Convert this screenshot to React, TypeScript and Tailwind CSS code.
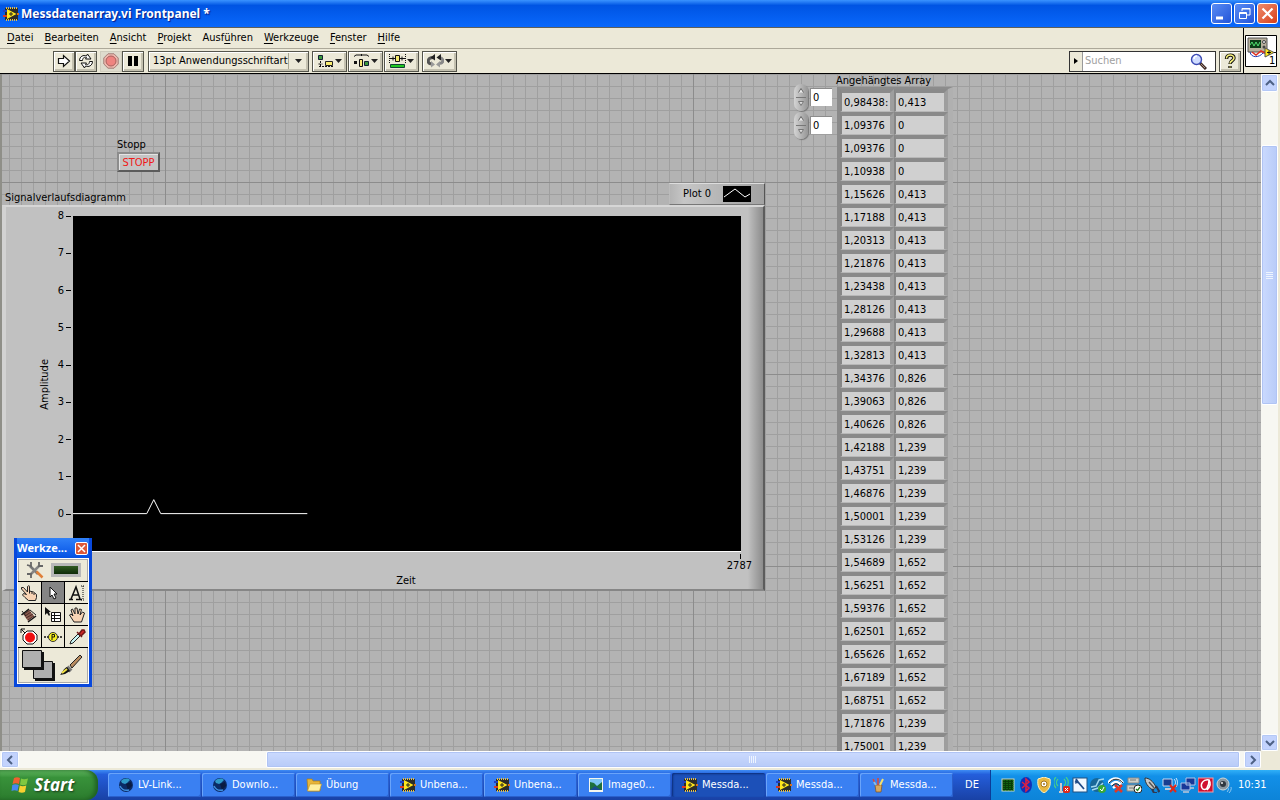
import type { ReactNode } from "react";

const rows: [string, string][] = [
  ["0,98438:", "0,413"],
  ["1,09376", "0"],
  ["1,09376", "0"],
  ["1,10938", "0"],
  ["1,15626", "0,413"],
  ["1,17188", "0,413"],
  ["1,20313", "0,413"],
  ["1,21876", "0,413"],
  ["1,23438", "0,413"],
  ["1,28126", "0,413"],
  ["1,29688", "0,413"],
  ["1,32813", "0,413"],
  ["1,34376", "0,826"],
  ["1,39063", "0,826"],
  ["1,40626", "0,826"],
  ["1,42188", "1,239"],
  ["1,43751", "1,239"],
  ["1,46876", "1,239"],
  ["1,50001", "1,239"],
  ["1,53126", "1,239"],
  ["1,54689", "1,652"],
  ["1,56251", "1,652"],
  ["1,59376", "1,652"],
  ["1,62501", "1,652"],
  ["1,65626", "1,652"],
  ["1,67189", "1,652"],
  ["1,68751", "1,652"],
  ["1,71876", "1,239"],
  ["1,75001", "1,239"],
];

// [text before the access key, access key, rest]
const menus: [string, string, string][] = [
  ["", "D", "atei"],
  ["", "B", "earbeiten"],
  ["", "A", "nsicht"],
  ["", "P", "rojekt"],
  ["Ausf", "ü", "hren"],
  ["", "W", "erkzeuge"],
  ["", "F", "enster"],
  ["", "H", "ilfe"],
];

const toolButton =
  "flex h-[21px] shrink-0 items-center justify-center border border-[#55554c] bg-[#ece9d8] shadow-[inset_1px_1px_0_#fff,inset_-2px_-2px_0_#c4c1b0]";

function ViIcon({ className = "size-4" }: { className?: string }) {
  return (
    <svg viewBox="0 0 16 16" className={className} aria-hidden="true">
      <rect x="2" y="2" width="13" height="12" fill="#2c2c28" />
      <path d="M3 2h11M3 14h11" stroke="#e5c04a" strokeWidth="2" strokeDasharray="1 1" />
      <path d="M0 5h4" stroke="#2040c0" strokeWidth="2" />
      <path d="M0 10h4" stroke="#d83a20" strokeWidth="2" />
      <path d="M14 8h2" stroke="#d87020" strokeWidth="2" />
      <path d="M4 3v10L13.500 8z" fill="#ffe71c" />
      <path d="M6 8h4M8 6v4" stroke="#222" />
    </svg>
  );
}

function Globe() {
  return (
    <svg viewBox="0 0 16 16" className="size-4" aria-hidden="true">
      <circle cx="8" cy="8" r="7" fill="#0b2b66" />
      <path d="M3 4c3-3 7-3 9-1l-3 3-2 1-3-1z" fill="#2f9ac8" />
      <path d="M8 7l5-2 1 4-4 4z" fill="#0a1b40" />
      <path d="M2 9c2 4 5 5 9 4" stroke="#3f8fe0" strokeWidth="1.500" fill="none" />
    </svg>
  );
}

function Folder() {
  return (
    <svg viewBox="0 0 16 16" className="size-4" aria-hidden="true">
      <path d="M1 2h5l1 2h7v10H2z" fill="#e8b63a" stroke="#b07d10" strokeWidth=".7" />
      <path d="M4 7h11.500l-2 7H1.500z" fill="#fff0a0" stroke="#c59a28" strokeWidth=".7" />
    </svg>
  );
}

function Picture() {
  return (
    <svg viewBox="0 0 16 16" className="size-4" aria-hidden="true">
      <rect x="1" y="1" width="14" height="14" fill="#f4f6ee" />
      <rect x="2" y="2" width="12" height="11" fill="#7cc4f4" />
      <path d="M2 13V5l4 1 3 3 5-4v8z" fill="#1d6f3c" />
      <path d="M2 13l5-4 6 4z" fill="#184a90" />
    </svg>
  );
}

function Brushes() {
  return (
    <svg viewBox="0 0 16 16" className="size-4" aria-hidden="true">
      <path d="M5 8h7l-1 7H6z" fill="#d8a860" stroke="#7c5020" strokeWidth=".7" />
      <path d="M6 8L3 2M8 8V1" stroke="#e04830" strokeWidth="1.500" />
      <path d="M10 8l3-6" stroke="#f4e070" strokeWidth="2" />
      <path d="M4 5l2 3" stroke="#7ec0f0" strokeWidth="2" />
    </svg>
  );
}

function Chevron({ d }: { d: string }) {
  return (
    <svg viewBox="0 0 10 10" className="size-[10px]" aria-hidden="true">
      <path d={d} fill="none" stroke="#4d6185" strokeWidth="2" />
    </svg>
  );
}

const scrollButton =
  "flex shrink-0 items-center justify-center rounded-xs border border-white bg-[#c3d3fd] shadow-[inset_0_0_0_1px_#b4c8f6]";

function Caret() {
  return (
    <svg viewBox="0 0 7 4" className="h-1 w-[7px]" aria-hidden="true">
      <path d="M0 0h7L3.500 4z" fill="#222" />
    </svg>
  );
}

function TitleBar() {
  const button =
    "flex size-[21px] items-center justify-center rounded-[3px] border border-white";
  return (
    <header className="flex h-7 shrink-0 items-center border-b border-[#5f5f5c] bg-linear-to-b from-[#3a93ff] via-[#0054e3] via-20% to-[#0a68fc] pr-[2px] pl-[3px]">
      <ViIcon />
      <h1 className="ml-[2px] font-['Noto_Sans','Liberation_Sans',sans-serif] text-[12px] font-bold text-white [text-shadow:1px_1px_1px_#0a1883]">
        Messdatenarray.vi Frontpanel *
      </h1>
      <div className="ml-auto flex gap-[2px]">
        <button aria-label="Minimieren" className={`${button} bg-linear-to-br from-[#5a8cf4] to-[#2353d8]`}>
          <svg viewBox="0 0 19 19" className="size-[19px]"><path d="M4 14h7" stroke="#fff" strokeWidth="3" /></svg>
        </button>
        <button aria-label="Wiederherstellen" className={`${button} bg-linear-to-br from-[#5a8cf4] to-[#2353d8]`}>
          <svg viewBox="0 0 19 19" className="size-[19px]" fill="none" stroke="#fff">
            <path d="M7 7V4.500h8V11h-3M7 5h8" />
            <path d="M4.500 8.500h7v6h-7zM4.500 9.500h7" />
          </svg>
        </button>
        <button aria-label="Schließen" className={`${button} bg-linear-to-br from-[#ec8a6a] to-[#d83c12]`}>
          <svg viewBox="0 0 19 19" className="size-[19px]"><path d="M4.500 4.500l10 10M14.500 4.500l-10 10" stroke="#fff" strokeWidth="2.200" /></svg>
        </button>
      </div>
    </header>
  );
}

function Toolbar() {
  return (
    <div className="flex h-6 items-center pr-[2px] pl-[53px]">
      <button aria-label="Ausführen" className={`${toolButton} w-[22px]`}>
        <svg viewBox="0 0 14 14" className="size-[14px]"><path d="M1.500 4.500h5v-3L12.500 7l-6 5.500v-3h-5z" fill="#fff" stroke="#111" strokeWidth="1.200" /></svg>
      </button>
      <button aria-label="Wiederholt ausführen" className={`${toolButton} w-[22px]`}>
        <svg viewBox="0 0 16 16" className="size-4" fill="#fff" stroke="#111">
          <path d="M1.500 7.500c0-4 4-6 7-4.500l1-2 3.500 5H7.500l1-1.500c-2-1-4 .5-4 3z" />
          <path d="M14.500 8.500c0 4-4 6-7 4.500l-1 2L3 10h5.500l-1 1.500c2 1 4-.5 4-3z" />
        </svg>
      </button>
      <button aria-label="Abbrechen" disabled className="ml-[3px] flex h-[21px] w-[22px] items-center justify-center border border-[#cfccbd] bg-[#dedbcd]">
        <svg viewBox="0 0 16 16" className="size-4">
          <path d="M5 .8h6L15.200 5v6L11 15.200H5L.8 11V5z" fill="#efb8ae" stroke="#a07c76" />
          <circle cx="8" cy="8" r="5" fill="#ef8480" stroke="#a8605c" />
        </svg>
      </button>
      <button aria-label="Pause" className={`${toolButton} w-[22px]`}>
        <svg viewBox="0 0 12 12" className="size-3"><path d="M1 1h4v10H1zM7 1h4v10H7z" fill="#000" /></svg>
      </button>
      <div className={`${toolButton} relative ml-1 w-[161px]`}>
        <select aria-label="Schriftart" className="h-full w-full appearance-none bg-transparent pl-1 text-[11px] outline-none">
          <option>13pt Anwendungsschriftart</option>
        </select>
        <span className="pointer-events-none absolute right-[6px] flex h-4 items-center border-l border-[#aaa795] pl-[6px]">
          <Caret />
        </span>
      </div>
      <button aria-label="Objekte ausrichten" className={`${toolButton} ml-[3px] w-[35px] gap-px`}>
        <svg viewBox="0 0 17 14" className="h-[14px] w-[17px]">
          <path d="M1.500 1.500h4v4h-4z" fill="#3c9a3c" stroke="#123" />
          <path d="M3.500 7v5M1.500 10h4M2 12.500h14" stroke="#111" strokeDasharray="2 1" />
          <path d="M8.500 7.500h7v4h-7z" fill="#f8ec70" stroke="#222" />
        </svg>
        <Caret />
      </button>
      <button aria-label="Objekte einteilen" className={`${toolButton} ml-px w-[35px] gap-px`}>
        <svg viewBox="0 0 17 14" className="h-[14px] w-[17px]">
          <path d="M1 2.500L3 1h11l2 1.500M8.500 0v2" stroke="#111" fill="none" />
          <path d="M1 7h3v3H1z" fill="#111" />
          <path d="M6.500 5.500h3v7h-3z" fill="#f8ec70" stroke="#111" />
          <path d="M11.500 7.500h4v4h-4z" fill="#3c9a3c" stroke="#123" />
        </svg>
        <Caret />
      </button>
      <button aria-label="Objektgröße ändern" className={`${toolButton} ml-px w-[35px] gap-px`}>
        <svg viewBox="0 0 17 14" className="h-[14px] w-[17px]">
          <path d="M.5 0v9M16.500 0v9" stroke="#111" strokeDasharray="1 1" />
          <path d="M1 4.500h5M11 4.500h5M4 2.500v4M13 2.500v4" stroke="#111" />
          <path d="M6.500 1.500h4v6h-4z" fill="#f8ec70" stroke="#111" />
          <path d="M1.500 10.500h14v3h-14z" fill="#20c820" stroke="#143" />
        </svg>
        <Caret />
      </button>
      <button aria-label="Neu anordnen" className={`${toolButton} ml-[3px] w-[35px] gap-px`}>
        <svg viewBox="0 0 17 14" className="h-[14px] w-[17px]" fill="none">
          <path d="M4 10C0 9 0 4 6 3.500" stroke="#555" strokeWidth="3" />
          <path d="M13 9.500c4-1 4-5-1-6" stroke="#888" strokeWidth="3" />
          <path d="M8 0v6.500L3.500 3.500zM14 0v6.500L9.500 3.500z" fill="#222" />
          <path d="M4 7v6.500L8 10.500zM13 7v6.500L9 10.500z" fill="#999" />
        </svg>
        <Caret />
      </button>
      <div className="ml-auto flex h-[21px] w-[147px] items-center border border-[#333] bg-white">
        <button aria-label="Suchbereich" className="flex h-full w-[13px] shrink-0 items-center justify-center border-r border-[#999] bg-[#ece9d8]">
          <svg viewBox="0 0 4 6" className="h-[6px] w-1"><path d="M0 0l4 3-4 3z" /></svg>
        </button>
        <input aria-label="Suchen" placeholder="Suchen" className="min-w-0 flex-1 pl-[2px] text-[11px] outline-none placeholder:text-[#a0a0a0]" />
        <svg viewBox="0 0 17 17" className="mr-2 size-[17px]" aria-hidden="true">
          <path d="M10 10l6 6" stroke="#3d2c28" strokeWidth="3" />
          <path d="M11 11l4 4" stroke="#b09080" />
          <circle cx="6.500" cy="6.500" r="5" fill="#cfdcff" stroke="#3d4bb4" strokeWidth="1.400" />
          <path d="M4 6c0-2 1-3 3-3" stroke="#fff" strokeWidth="1.500" fill="none" />
        </svg>
      </div>
      <button aria-label="Kontexthilfe" className={`${toolButton} ml-[3px] w-[22px]`}>
        <svg viewBox="0 0 14 16" className="h-4 w-[14px]" fill="none">
          <path d="M3.500 6c0-5 7.500-5 7.500-1 0 3-4 2.500-4 6M7 13v2" stroke="#111" strokeWidth="3.400" />
          <path d="M3.500 5.600c0-4.600 7.500-4.600 7.500-.6 0 3-4 2.500-4 5.500M7 13.400v1.200" stroke="#fbf47c" strokeWidth="1.500" />
        </svg>
      </button>
    </div>
  );
}

function Spinner({ id }: { id: string }) {
  return (
    <div className="flex h-7 items-center gap-[2px]">
      <span className="flex h-[27px] w-[14px] flex-col justify-center rounded-full bg-linear-to-r from-[#d4d4d4] to-[#969696] shadow-[1px_1px_1px_#777]">
        <button aria-label={`${id} erhöhen`} className="flex h-3 items-center justify-center">
          <svg viewBox="0 0 8 7" className="h-[7px] w-2"><path d="M1.500 5.500L4 1.500l2.500 4" fill="#eee" stroke="#666" /></svg>
        </button>
        <span className="mx-[2px] h-px bg-[#777]" />
        <button aria-label={`${id} verringern`} className="flex h-3 items-center justify-center">
          <svg viewBox="0 0 8 7" className="h-[7px] w-2"><path d="M1.500 1.500h5L4 5.500z" fill="#ddd" stroke="#777" /></svg>
        </button>
      </span>
      <input aria-label={id} defaultValue="0" className="h-[18px] w-[22px] border-t border-l border-[#8c8c8c] bg-white pl-[2px] text-[11px] outline-none" />
    </div>
  );
}

function ArrayIndicator() {
  return (
    <div className="absolute top-0 left-[792px]">
      <h2 className="pl-[42px] text-[11px] leading-[13px]">Angehängtes Array</h2>
      <div className="flex items-start gap-[5px]">
        <div className="-mt-1 flex flex-col">
          <Spinner id="Zeilenindex" />
          <Spinner id="Spaltenindex" />
        </div>
        <table aria-label="Angehängtes Array" className="table-fixed border-separate border-spacing-0 border-t-2 border-r-[5px] border-l-[3px] border-t-[#8c8c8c] border-r-[#b0b0b0] border-l-[#8a8a8a] bg-[#a4a4a4]">
          <tbody>
            {rows.map((row, i) => (
              <tr key={i}>
                {row.map((value, j) => (
                  <td key={j} className="h-[23px] border-t-4 border-r-4 border-b border-l-2 border-t-[#8a8a8a] border-r-[#9e9e9e] border-b-[#b8b8b8] border-l-[#868686] bg-[#d0d0d0] p-0">
                    <div className="h-[18px] w-12 overflow-hidden pl-[2px] text-[11px] leading-[19px] whitespace-nowrap">{value}</div>
                  </td>
                ))}
              </tr>
            ))}
          </tbody>
        </table>
      </div>
    </div>
  );
}

function Chart() {
  return (
    <figure className="absolute top-[109px] left-0 w-[763px]">
      <div className="flex h-[22px] items-end justify-between">
        <figcaption className="pl-[3px] text-[11px] leading-[14px]">Signalverlaufsdiagramm</figcaption>
        <div className="flex h-[22px] w-[96px] items-center border border-t-[#ddd] border-r-[#555] border-b-[#777] border-l-[#bbb] bg-linear-to-r from-[#b4b4b4] via-[#c6c6c6] via-15% to-[#a2a2a2] pl-[13px] text-[11px]">
          <span>Plot 0</span>
          <svg viewBox="0 0 28 16" className="ml-auto mr-[13px] h-4 w-7 bg-black" aria-hidden="true">
            <path d="M1 11L12 3l10 8 5-3" fill="none" stroke="#fff" />
          </svg>
        </div>
      </div>
      <div className="flex flex-col border-t-2 border-r-2 border-b-2 border-l-4 border-t-[#d6d6d6] border-r-[#5c5c5c] border-b-[#868686] border-l-[#d2d2d2] bg-linear-to-r from-[#c1c1c1] from-98% to-[#8c8c8c] pt-[9px] pr-[22px]">
        <div className="flex h-[336px]">
          <div className="flex w-[67px] items-start justify-end">
            <span className="self-center text-[11px] leading-[14px] [writing-mode:vertical-rl] rotate-180">Amplitude</span>
            <div className="-mt-[7px] ml-[6px] flex h-[312px] flex-col justify-between">
              {[8, 7, 6, 5, 4, 3, 2, 1, 0].map((tick) => (
                <div key={tick} className="flex items-center gap-[2px] pr-[2px] text-[11px] leading-[14px]">
                  {tick}
                  <span className="h-px w-[5px] bg-black" />
                </div>
              ))}
            </div>
          </div>
          <svg viewBox="0 0 668 336" className="h-full min-w-0 flex-1 border-b border-white bg-black" role="img" aria-label="Signalverlauf">
            <path d="M-1 298.500h74l7-14 7 14h147" fill="none" stroke="#fff" />
          </svg>
        </div>
        <div className="flex flex-col items-end text-[11px] leading-[14px]">
          <span className="mt-[2px] h-[5px] w-px bg-black" />
          <span className="-mr-[11px]">2787</span>
        </div>
        <div className="h-4 pl-[65px] text-center text-[11px] leading-4">Zeit</div>
      </div>
    </figure>
  );
}

const tools: { name: string; active?: boolean; icon: ReactNode }[] = [
  {
    name: "Wert einstellen",
    icon: (
      <>
        <path d="M1.500 3.500h2l4 4.500V2.500c1-1 2-1 2 0V7l4 1 3 2.500v3l-1 3h-7L5 13.500 2.500 11l1-1.500 3 1L1.500 5z" fill="#f8d4b4" stroke="#222" />
        <path d="M9.500 7v2.500M12 8v2M14 9v2" stroke="#222" />
      </>
    ),
  },
  {
    name: "Position/Größe/Auswahl",
    active: true,
    icon: <path d="M6 3v10l2-2 2 4 2-1-2-4h3z" fill="#fff" stroke="#111" />,
  },
  {
    name: "Text bearbeiten",
    icon: (
      <>
        <path d="M1 15.500h4M8 15.500h6M3 15L8 3l4 12M4.500 11h6" fill="none" stroke="#111" strokeWidth="1.500" />
        <path d="M13 2h4M15 2v14M13 16h4" stroke="#111" strokeDasharray="1 1" />
      </>
    ),
  },
  {
    name: "Verbinden",
    icon: (
      <>
        <path d="M3 8l6-4 5 6-6 5z" fill="#8c5c50" />
        <path d="M1.500 9L9 3M8 16l8-6" stroke="#111" strokeWidth="1.500" />
        <path d="M4 8l6-4M5 10l6-4M6 12l7-4M8 14l6-4" stroke="#4c2c28" />
        <path d="M2 5l4 5M10 4l6 5" stroke="#222" />
      </>
    ),
  },
  {
    name: "Objekt-Kontextmenü",
    icon: (
      <>
        <path d="M1 1v8l2-2 2 3 1-1-1-3h2z" fill="#111" />
        <path d="M7.500 6.500h9v9h-9zM7.500 9.500h9M7.500 12.500h9M10.500 6.500v9" fill="#fff" stroke="#111" />
      </>
    ),
  },
  {
    name: "Fenster verschieben",
    icon: <path d="M6 16L1.500 9 3 8l2 2L3 4l1.500-1L7 8 7 2h2l1 6 1.500-5 2 .5L12 9l2.500-3 2 1-3 9z" fill="#f8d4b4" stroke="#222" />,
  },
  {
    name: "Haltepunkt",
    icon: (
      <>
        <path d="M7 3h6l4 4v5l-4 4H7l-4-4V7z" fill="#fff" stroke="#111" />
        <circle cx="10" cy="9.500" r="5" fill="#f01010" />
        <path d="M1 5V1h4M1 1l4 4" stroke="#111" fill="none" />
      </>
    ),
  },
  {
    name: "Sonde",
    icon: (
      <>
        <path d="M0 9h5M13 9h5" stroke="#111" strokeWidth="1.500" strokeDasharray="2 1" />
        <circle cx="9" cy="9" r="4.500" fill="#f8f020" stroke="#333" />
        <path d="M8 12V6.500h2.500v2.500H8" fill="none" stroke="#111" />
      </>
    ),
  },
  {
    name: "Farbe übernehmen",
    icon: (
      <>
        <path d="M2 16l1-3 7-7 2 2-7 7z" fill="#c8f4f4" stroke="#222" />
        <path d="M9 4l5 5M11 6l3-4 2 0 1 2-4 4z" fill="#d02828" stroke="#701818" strokeWidth="1.500" />
      </>
    ),
  },
];

function ToolPalette() {
  return (
    <aside aria-label="Werkzeugpalette" className="absolute top-[464px] left-3 w-[78px] border-[3px] border-t-0 border-[#0848dc] bg-[#0848dc]">
      <div className="flex h-5 items-center justify-between bg-linear-to-b from-[#2f80f8] to-[#0450e4] font-['Noto_Sans','Liberation_Sans',sans-serif] text-[11px] font-bold text-white">
        <span>Werkze...</span>
        <button aria-label="Schließen" className="mr-px flex size-[13px] items-center justify-center rounded-xs border border-white bg-[#dc5838]">
          <svg viewBox="0 0 9 9" className="size-[9px]"><path d="M1 1l7 7M8 1L1 8" stroke="#fff" strokeWidth="1.500" /></svg>
        </button>
      </div>
      <div className="border border-white bg-[#ece9d8] shadow-[inset_0_0_0_1px_#aaa]">
        <button aria-label="Automatische Werkzeugwahl" className="flex h-[22px] w-full items-center justify-around px-1">
          <svg viewBox="0 0 18 18" className="size-[18px]">
            <path d="M4 5l8 8" stroke="#777" strokeWidth="2.500" />
            <path d="M13 5L4 14" stroke="#858585" strokeWidth="2.500" />
            <path d="M10.500 10.500l6 6" stroke="#e08038" strokeWidth="2.500" />
            <path d="M1 4l4 1 0-4M13 1l0 4 4 0M1 13l4 0 0 4" stroke="#666" fill="none" strokeWidth="1.800" />
          </svg>
          <span className="h-[14px] w-[30px] border-[3px] border-[#b8b8b8] bg-linear-to-b from-[#315c22] to-[#102c08]" />
        </button>
        <div className="grid grid-cols-3 gap-px border-y border-black bg-black">
          {tools.map((tool) => (
            <button key={tool.name} aria-label={tool.name} className={`flex h-[21px] items-center justify-center ${tool.active ? "bg-[#858585]" : "bg-[#ece9d8]"}`}>
              <svg viewBox="0 0 18 18" className="size-[18px]">{tool.icon}</svg>
            </button>
          ))}
        </div>
        <button aria-label="Farbe setzen" className="flex h-[35px] w-full items-center justify-center">
          <svg viewBox="0 0 66 34" className="h-[34px] w-[66px]">
            <path d="M15 14h20v18H15z" fill="#111" />
            <path d="M13.500 12.500h19v17h-19z" fill="#b0b0b0" stroke="#111" />
            <path d="M4 3h20v18H4z" fill="#111" />
            <path d="M2.500 1.500h19v17h-19z" fill="#b0b0b0" stroke="#111" />
            <path d="M50 16L60 6l2 2-10 11z" fill="#b88c60" stroke="#222" />
            <path d="M47 18l4 4" stroke="#777" strokeWidth="4" />
            <path d="M47 18l3 4-5 3-5 1c3-3 3-6 7-8z" fill="#111" />
            <path d="M42 24l5-4" stroke="#f0e040" strokeWidth="2" />
          </svg>
        </button>
      </div>
    </aside>
  );
}

function VerticalScrollbar() {
  return (
    <div className="flex w-[19px] shrink-0 flex-col border-r-2 border-[#ece9d8] bg-[#f7f7f2]">
      <button aria-label="Nach oben" className={`${scrollButton} h-[18px]`}><Chevron d="M1 7l4-4 4 4" /></button>
      <div className="flex flex-1 flex-col">
        <div className="grow-[53] basis-0" />
        <div className="flex grow-[258] basis-0 flex-col items-center justify-center gap-px rounded-xs border border-white bg-linear-to-r from-[#cbdafe] to-[#b8cbf8] shadow-[inset_0_0_0_1px_#b0c4f4]">
          {[0, 1, 2, 3].map((n) => <span key={n} className="h-px w-[7px] bg-[#eef4fe]" />)}
        </div>
        <div className="grow-[328] basis-0" />
      </div>
      <button aria-label="Nach unten" className={`${scrollButton} h-[17px]`}><Chevron d="M1 3l4 4 4-4" /></button>
    </div>
  );
}

function HorizontalScrollbar() {
  return (
    <div className="flex h-[19px] shrink-0 border-b-2 border-[#ece9d8] bg-[#f7f7f2] pl-px">
      <button aria-label="Nach links" className={`${scrollButton} w-[18px]`}><Chevron d="M7 1L3 5l4 4" /></button>
      <div className="flex flex-1">
        <div className="grow-[247] basis-0" />
        <div className="flex grow-[973] basis-0 items-center justify-center gap-px rounded-xs border border-white bg-linear-to-b from-[#cbdafe] to-[#b8cbf8] shadow-[inset_0_0_0_1px_#b0c4f4]">
          {[0, 1, 2, 3].map((n) => <span key={n} className="h-[7px] w-px bg-[#eef4fe]" />)}
        </div>
        <div className="grow-[4] basis-0" />
      </div>
      <button aria-label="Nach rechts" className={`${scrollButton} w-[17px]`}><Chevron d="M3 1l4 4-4 4" /></button>
      <div className="w-[19px] bg-[#ece9d8]" />
    </div>
  );
}

const tasks: { label: string; icon: ReactNode; active?: boolean }[] = [
  { label: "LV-Link...", icon: <Globe /> },
  { label: "Downlo...", icon: <Globe /> },
  { label: "Übung", icon: <Folder /> },
  { label: "Unbena...", icon: <ViIcon /> },
  { label: "Unbena...", icon: <ViIcon /> },
  { label: "Image0...", icon: <Picture /> },
  { label: "Messda...", icon: <ViIcon />, active: true },
  { label: "Messda...", icon: <ViIcon /> },
  { label: "Messda...", icon: <Brushes /> },
];

const trayIcons: ReactNode[] = [
  <>
    <rect x="2" y="2" width="12" height="12" fill="#083c08" stroke="#c8d8c0" />
    <path d="M4 3v11M7 3v11M10 3v11M13 3v11" stroke="#1c8c1c" strokeDasharray="1 1" />
  </>,
  <>
    <ellipse cx="8" cy="8" rx="6" ry="8" fill="#1030b8" />
    <path d="M4 5l7 6-3 3V2l3 3-7 6" fill="none" stroke="#e02040" strokeWidth="1.500" />
  </>,
  <>
    <path d="M8 0l6 2c1 7-1 11-6 14C3 13 1 9 2 2z" fill="#e8b840" stroke="#fff0c0" />
    <circle cx="8" cy="7" r="3" fill="#fff" stroke="#a47820" />
    <circle cx="8" cy="7" r="1" fill="#a47820" />
  </>,
  <>
    <path d="M7 6v9M5 15h4" stroke="#ccc" strokeWidth="2" />
    <path d="M4 2c-2 2-2 5 0 7M2 0c-3 3-3 8 0 11M10 2c2 2 2 5 0 7M12 0c3 3 3 8 0 11" fill="none" stroke="#48d088" strokeWidth="1.200" />
    <rect x="9" y="9" width="7" height="7" rx="2" fill="#e02818" />
    <path d="M11 11l3 3M14 11l-3 3" stroke="#fff" />
  </>,
  <>
    <rect x="1" y="1" width="14" height="14" fill="#f0f8ff" stroke="#205080" />
    <path d="M3 4l3 1 6 7M4 2l2 3-3 1" stroke="#204c88" strokeWidth="1.800" fill="none" />
  </>,
  <>
    <circle cx="7" cy="8" r="7" fill="#186898" />
    <path d="M1 10l5-1 3-6 5-1M2 13l6-2 5-5" stroke="#a0d8f0" strokeWidth="1.500" fill="none" />
    <circle cx="12" cy="12" r="4" fill="#38a838" />
    <path d="M10 12l2 2 2-4" stroke="#fff" fill="none" />
  </>,
  <>
    <path d="M0 6c4-6 11-6 15 0M3 8c3-4 7-4 10 0M5 11c2-2 4-2 6 0" fill="none" stroke="#fff" strokeWidth="2.500" />
    <path d="M1 6c4-5 10-5 14 0M4 9c2-3 6-3 8 0" fill="none" stroke="#222" />
    <path d="M7 8l7 7M14 8l-7 7" stroke="#e03828" strokeWidth="2.500" />
  </>,
  <>
    <path d="M2 1h11v5H2zM1 8h13v6H1z" fill="#d0d0c8" stroke="#888" />
    <path d="M4 3h6M3 11h5" stroke="#777" />
    <circle cx="12" cy="12" r="4" fill="#fff" stroke="#222" />
    <path d="M10 12l1.500 1.500L14 10" stroke="#208020" fill="none" strokeWidth="1.300" />
  </>,
  <>
    <path d="M1 1c4 0 8 3 11 9l-3 3C4 10 1 6 1 1z" fill="#c8c8c8" stroke="#333" />
    <path d="M5 5l6 7" stroke="#555" strokeWidth="1.500" />
    <path d="M12 9l3 5-1 1M8 12l2 4h3" stroke="#303850" strokeWidth="2" fill="none" />
  </>,
  <>
    <path d="M1 2h9v7H1z" fill="#183c90" stroke="#c8d8f0" />
    <path d="M3 12h6" stroke="#c0c8d8" strokeWidth="2" />
    <path d="M12 2c2 2 2 5 0 7M14 1c2 3 2 6 0 9" stroke="#dcecff" fill="none" />
    <path d="M8 8l6 7M14 8l-6 7" stroke="#e02818" strokeWidth="2" />
  </>,
  <>
    <path d="M6 1h9v7H6zM1 6h9v7H1z" fill="#183898" stroke="#b0c4e8" />
    <path d="M3 15h6M10 11h4" stroke="#c0c8d8" strokeWidth="1.500" />
  </>,
  <>
    <rect x="0" y="1" width="15" height="14" fill="#d01030" stroke="#f4a0a8" />
    <path d="M11 3c-6-1-9 4-7 8 1 2 4 2 5 0 2-3 2-6 2-8zM11 3c2 3 1 7-2 10" fill="none" stroke="#fff" strokeWidth="1.500" />
  </>,
  <>
    <circle cx="7" cy="7" r="6" fill="#8c98a0" stroke="#ccd8dc" />
    <circle cx="7" cy="7" r="3" fill="#303840" />
    <circle cx="6" cy="6" r="1" fill="#eee" />
    <path d="M12 11c1 1 0 3-1 4M15 10c1 2-1 5-2 6" stroke="#90c8f0" fill="none" />
  </>,
];

function Taskbar() {
  return (
    <footer className="flex h-[30px] shrink-0 bg-linear-to-b from-[#3f8cf4] via-[#245edb] via-15% to-[#1941a5] text-[11px] text-white">
      <button className="flex w-[98px] items-center gap-[5px] rounded-r-xl bg-linear-to-b from-[#62b862] via-[#38923a] via-25% to-[#2c7c2e] pl-[11px] shadow-[inset_-3px_0_4px_#1f5f22]">
        <svg viewBox="0 0 18 18" className="size-[18px]" aria-hidden="true">
          <path d="M3 2c2-1 4-1 6 0L8 8C6 7 4 7 1.500 8z" fill="#f06030" />
          <path d="M10 2.500c2 1 4 1 7 0L15.500 8.500c-2 1-4 1-6.500 0z" fill="#80c840" />
          <path d="M1.300 9c2-1 4-1 6.500 0L6.500 15c-2-1-4-1-6 0z" fill="#4888f0" />
          <path d="M8.800 9.500c2 1 4 1 6.500 0L14 16c-2 1-4 1-6.500 0z" fill="#f8d030" />
        </svg>
        <span className="font-['Open_Sans','Liberation_Sans',sans-serif] text-[17px] font-bold italic [text-shadow:1px_1px_2px_#1a3c1c]">Start</span>
      </button>
      <nav aria-label="Geöffnete Fenster" className="ml-[10px] flex min-w-0 flex-1 pt-[3px] pb-[3px]">
        {tasks.map((task, i) => (
          <button
            key={i}
            className={`mr-px flex min-w-0 flex-1 items-center gap-1 rounded-xs pl-[10px] whitespace-nowrap ${
              task.active
                ? "bg-[#1c50b8] shadow-[inset_1px_1px_2px_#0c2c78]"
                : "bg-[#3a80f2] shadow-[inset_1px_1px_0_#6aa4fa,inset_-1px_-1px_0_#2a60cc]"
            }`}
          >
            {task.icon}
            {task.label}
          </button>
        ))}
      </nav>
      <div className="flex w-9 items-center justify-center">DE</div>
      <div className="flex w-[290px] items-center border-l border-[#0c3c98] bg-linear-to-b from-[#30b0f8] via-[#1290e8] via-20% to-[#0d84d8] pl-[9px]">
        <div className="flex gap-[2px]">
          {trayIcons.map((icon, i) => (
            <svg key={i} viewBox="0 0 16 16" className="size-4" aria-hidden="true">{icon}</svg>
          ))}
        </div>
        <time className="ml-[6px]">10:31</time>
      </div>
    </footer>
  );
}

export default function App() {
  return (
    <div className="flex h-screen flex-col overflow-hidden bg-[#ece9d8] font-['DejaVu_Sans_Condensed','Liberation_Sans',sans-serif] text-[11px] text-black">
      <TitleBar />
      <div className="flex shrink-0 border-b border-black">
        <div className="min-w-0 flex-1">
          <nav aria-label="Menü" className="flex h-[21px] items-center gap-[11px] border-b border-[#aca899] pl-[7px]">
            {menus.map(([before, key, after]) => (
              <button key={key}>{before}<u className="underline-offset-2">{key}</u>{after}</button>
            ))}
          </nav>
          <Toolbar />
        </div>
        <div className="flex w-[37px] items-center border-l border-black pl-px">
          <svg viewBox="0 0 32 32" className="size-8" role="img" aria-label="VI-Symbol">
            <path d="M.5.500h31v31H.5z" fill="#fff" stroke="#000" />
            <path d="M3 3h19v14H3z" fill="#b8b09c" stroke="#555" />
            <path d="M5 5h11v8H5z" fill="#0c3c18" />
            <path d="M5 10l2-3 2 4 2-4 2 4 2-4" stroke="#50e070" fill="none" />
            <circle cx="19" cy="7" r="1.500" fill="#eee" stroke="#444" />
            <circle cx="19" cy="12" r="1.500" fill="#444" />
            <path d="M5 17c1 6 9 6 13 1h3" stroke="#2038b0" fill="none" />
            <path d="M7 17l4 3 5-4 4 2" stroke="#e03020" fill="none" strokeWidth="1.500" />
            <path d="M20 13v9l9-4.500z" fill="#ffe71c" stroke="#555" />
            <path d="M22 17.500h4M24 15.500v4M29 17.500h3" stroke="#111" />
            <text x="24" y="29" fontSize="11">1</text>
          </svg>
        </div>
      </div>
      <div className="flex min-h-0 flex-1">
        <main className="relative min-w-0 flex-1 overflow-hidden border-l-2 border-[#8f8f88] bg-[#b3b3b3] bg-[linear-gradient(to_right,#8c8c8c_1px,transparent_1px),linear-gradient(to_bottom,#8c8c8c_1px,transparent_1px),linear-gradient(to_right,#9f9f9f_1px,transparent_1px),linear-gradient(to_bottom,#9f9f9f_1px,transparent_1px)] bg-[size:528px_100%,100%_192px,12px_100%,100%_12px] bg-[position:163px_0,0_108px,7px_0,0_0]">
          <div className="absolute top-[63px] left-[115px] flex flex-col items-start">
            <label htmlFor="stopp" className="leading-[15px]">Stopp</label>
            <button id="stopp" className="h-5 w-[43px] border-2 border-t-[#8c8c8c] border-r-[#5c5c5c] border-b-[#5c5c5c] border-l-[#8c8c8c] bg-[#c4c4c4] pt-px text-[11px] leading-[15px] text-[#f01818] shadow-[inset_1px_1px_0_#e4e4e4]">
              STOPP
            </button>
          </div>
          <Chart />
          <ArrayIndicator />
          <ToolPalette />
        </main>
        <VerticalScrollbar />
      </div>
      <HorizontalScrollbar />
      <Taskbar />
    </div>
  );
}
